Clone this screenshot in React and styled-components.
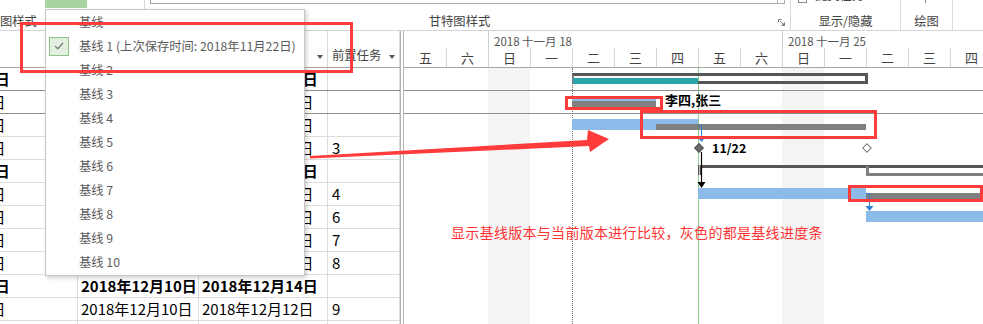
import React from 'react';
import styled, { createGlobalStyle } from 'styled-components';

const DAY = 42;
const RED = '#ff3b3b';
const FONT = '"Noto Sans CJK SC", "Noto Sans", sans-serif';
const COLS = '187px 121px 129px 72px';

const GlobalStyle = createGlobalStyle`
  *, *::before, *::after { box-sizing: border-box; }
  html, body { margin: 0; padding: 0; background: #fff; overflow: hidden; }
  body { font-family: ${FONT}; }
`;

const Page = styled.div`
  position: relative;
  width: 983px;
  height: 324px;
  overflow: hidden;
  background: #fff;
  font-family: ${FONT};
`;

/* ---------- ribbon ---------- */
const Ribbon = styled.div`
  display: flex;
  height: 31px;
  border-bottom: 1px solid #d4d4d4;
`;

const Group = styled.div`
  position: relative;
  flex: ${p => (p.$width ? `0 0 ${p.$width}px` : '1 1 auto')};
  display: flex;
  flex-direction: column;
  border-right: ${p => (p.$width ? '1px solid #dadada' : 'none')};
`;

const GroupTop = styled.div`
  height: 10px;
  display: flex;
  align-items: flex-start;
`;

const GroupLabel = styled.div`
  flex: 1;
  display: flex;
  align-items: center;
  justify-content: ${p => p.$align || 'center'};
  padding: 3px ${p => p.$padRight || 0}px 0 0;
  font-size: 12.3px;
  color: #444;
  white-space: nowrap;
`;

const GreenTab = styled.div`
  margin-left: 45px;
  width: 42px;
  height: 8px;
  background: #a9d4a2;
`;

const Field = styled.div`
  margin-left: 5px;
  width: 635px;
  height: 4px;
  border: 1px solid #ababab;
  border-top: none;
  display: flex;
  justify-content: flex-end;
`;

const FieldButton = styled.div`
  width: 7px;
  border-left: 1px solid #ababab;
`;

const SubmitItem = styled.div`
  margin: -12px 0 0 7px;
  height: 15px;
  display: flex;
  align-items: flex-end;
  gap: 8px;
  font-size: 12.3px;
  line-height: 15px;
  color: #444;
`;

const MiniBox = styled.div`
  width: 9px;
  height: 9px;
  margin-bottom: 0;
  border: 1px solid #8a8a8a;
`;

const Tick = styled.div`
  margin-left: 24px;
  width: 1px;
  height: 3px;
  background: #888;
`;

const Launcher = styled.svg`
  position: absolute;
  right: 5px;
  bottom: 4px;
  width: 7px;
  height: 7px;
`;

/* ---------- task table ---------- */
const Main = styled.div`
  display: flex;
  height: 293px;
`;

const TablePane = styled.div`
  flex: 0 0 400px;
  overflow: hidden;
`;

const TableScroll = styled.div`
  margin-left: -109px;
`;

const HeadRow = styled.div`
  display: grid;
  grid-template-columns: ${COLS};
  height: 37px;
  border-bottom: 1px solid #a8a8a8;
`;

const HeadCell = styled.div`
  display: flex;
  align-items: center;
  padding: 12px 4px 0 4px;
  border-right: 1px solid #dadada;
  font-size: 12.3px;
  color: #444;
  white-space: nowrap;
  overflow: hidden;
`;

const DropArrow = styled.span`
  margin: 3px 0 0 auto;
  width: 0;
  height: 0;
  border-left: 3.5px solid transparent;
  border-right: 3.5px solid transparent;
  border-top: 4px solid #555;
`;

const Row = styled.div`
  display: grid;
  grid-template-columns: ${COLS};
  height: 23px;
  border-bottom: 1px solid ${p => (p.$dark ? '#8f8f8f' : '#dcdcdc')};
  font-weight: ${p => (p.$bold ? 700 : 400)};
`;

const Cell = styled.div`
  padding-left: ${p => p.$pad ?? 3}px;
  border-right: 1px solid #dcdcdc;
  font-size: 15px;
  line-height: 22px;
  color: #000;
  white-space: nowrap;
  overflow: hidden;
`;

/* ---------- gantt ---------- */
const Splitter = styled.div`
  flex: 0 0 4px;
  border-left: 1px solid #b3b3b3;
  border-right: 1px solid #b3b3b3;
`;

const ChartPane = styled.div`
  flex: 1;
  overflow: hidden;
`;

const TimeHead = styled.div`
  height: 37px;
  border-bottom: 1px solid #a8a8a8;
  display: flex;
  flex-direction: column;
`;

const WeekTier = styled.div`
  display: flex;
  height: 18px;
`;

const WeekCell = styled.div`
  flex: 0 0 ${p => p.$days * DAY}px;
  border-left: 1px solid ${p => (p.$first ? 'transparent' : '#d0d0d0')};
  padding: 3px 0 0 5px;
  font-size: 11.5px;
  line-height: 14px;
  color: #555;
  white-space: nowrap;
`;

const DayTier = styled.div`
  display: flex;
  flex: 1;
`;

const DayCell = styled.div`
  flex: 0 0 ${DAY}px;
  display: flex;
  align-items: center;
  justify-content: center;
  border-left: 1px solid ${p => (p.$first ? 'transparent' : '#d6d6d6')};
  font-size: 13px;
  color: #444;
`;

const ChartBody = styled.div`
  position: relative;
  height: 256px;
`;

const Bands = styled.div`
  position: absolute;
  inset: 0;
  display: flex;
`;

const Band = styled.div`
  flex: 0 0 ${DAY}px;
  background: ${p => (p.$off ? '#f4f4f4' : 'transparent')};
`;

const DateLine = styled.div`
  position: absolute;
  top: 0;
  bottom: 0;
  left: ${p => p.$day * DAY}px;
  border-left: 1px ${p => (p.$dotted ? 'dotted #6f6f6f' : 'solid #8fc88f')};
`;

const GanttRow = styled.div`
  position: relative;
  height: 23px;
  border-bottom: 1px solid ${p => (p.$dark ? '#8f8f8f' : 'transparent')};
`;

const TaskBar = styled.div`
  position: absolute;
  top: 5px;
  height: 11px;
  background: #8cbbea;
`;

const BaselineBar = styled.div`
  position: absolute;
  top: 10px;
  height: 6px;
  background: #808080;
`;

const SummaryBox = styled.div`
  position: absolute;
  top: 5px;
  height: 11px;
  border: 3px solid #555;
  border-left: 2px solid #7a7a7a;
`;

const Progress = styled.div`
  position: absolute;
  top: 10px;
  height: 6px;
  background: #2aa4a8;
`;

const SummaryLine = styled.div`
  position: absolute;
  top: 5px;
  height: 3px;
  background: #555;
`;

const SummaryCap = styled.div`
  position: absolute;
  top: 5px;
  width: 3px;
  height: 10px;
  border-left: 1px solid #555;
  border-right: 1px solid #555;
  background: #bbb;
`;

const BaseSummary = styled.div`
  position: absolute;
  top: 6px;
  height: 10px;
  border-left: 3px solid #808080;
  border-bottom: 3px solid #808080;
`;

const Diamond = styled.div`
  position: absolute;
  top: 11px;
  width: 7px;
  height: 7px;
  transform: translate(-50%, -50%) rotate(45deg);
  background: ${p => (p.$hollow ? '#fff' : '#6b6b6b')};
  border: 1px solid ${p => (p.$hollow ? '#7a7a7a' : '#555')};
`;

const BarLabel = styled.div`
  position: absolute;
  top: ${p => p.$top ?? 0}px;
  line-height: 22px;
  font-size: ${p => p.$size || 13}px;
  font-weight: 700;
  color: #000;
  white-space: nowrap;
`;

const Links = styled.svg`
  position: absolute;
  inset: 0;
  width: 100%;
  height: 100%;
  pointer-events: none;
`;

/* ---------- baseline menu ---------- */
const Menu = styled.div`
  position: absolute;
  left: 45px;
  top: 9px;
  width: 260px;
  height: 267px;
  background: #fff;
  border: 1px solid #c6c6c6;
  box-shadow: 2px 2px 4px rgba(0, 0, 0, 0.18);
  z-index: 5;
`;

const MenuItem = styled.div`
  display: flex;
  align-items: center;
  height: 24px;
  font-size: 12.3px;
  color: #5b5b5b;
  white-space: nowrap;
`;

const IconSlot = styled.div`
  flex: 0 0 33px;
  padding-left: 3px;
  display: flex;
  align-items: center;
`;

const CheckBox = styled.div`
  width: 20px;
  height: 19px;
  background: #e3f0e0;
  border: 1px solid #8cc487;
  display: flex;
  align-items: center;
  justify-content: center;
`;

/* ---------- red annotations ---------- */
const Mark = styled.div`
  position: absolute;
  border: 3px solid ${RED};
  z-index: 10;
`;

const Note = styled.div`
  position: absolute;
  left: 451px;
  top: 222px;
  font-size: 14px;
  letter-spacing: 0.3px;
  line-height: 20px;
  color: #ff3333;
  white-space: nowrap;
  z-index: 10;
`;

const Overlay = styled.svg`
  position: absolute;
  inset: 0;
  width: 983px;
  height: 324px;
  pointer-events: none;
  z-index: 10;
`;

const DAYS = ['五', '六', '日', '一', '二', '三', '四', '五', '六', '日', '一', '二', '三', '四'];
const WEEKS = [
  { days: 2, label: '' },
  { days: 7, label: '2018 十一月 18' },
  { days: 7, label: '2018 十一月 25' },
];

const COLUMNS = ['完成时间', '基线开始时间', '基线完成时间', '前置任务'];

const TASKS = [
  { cells: ['2018年11月26日', '2018年11月20日', '2018年11月26日', ''], bold: true, dark: true,
    chart: { summary: [4, 11], progress: [4, 7] } },
  { cells: ['2018年11月21日', '2018年11月20日', '2018年11月21日', ''], dark: true,
    chart: { task: [4, 6], base: [4, 6], label: '李四,张三' } },
  { cells: ['2018年11月22日', '2018年11月22日', '2018年11月26日', ''],
    chart: { task: [4, 7], base: [6, 11] } },
  { cells: ['2018年11月22日', '2018年11月26日', '2018年11月26日', '3'],
    chart: { milestone: 7, baseMilestone: 11, label: '11/22' } },
  { cells: ['2018年11月29日', '2018年11月26日', '2018年11月29日', ''], bold: true,
    chart: { summaryLine: [7, 15], baseSummary: [11, 15] } },
  { cells: ['2018年11月26日', '2018年11月26日', '2018年11月27日', '4'],
    chart: { task: [7, 11], base: [11, 15] } },
  { cells: ['2018年11月29日', '2018年11月27日', '2018年11月28日', '6'],
    chart: { task: [11, 15] } },
  { cells: ['2018年11月29日', '2018年11月28日', '2018年11月29日', '7'], chart: {} },
  { cells: ['2018年11月29日', '2018年11月29日', '2018年11月29日', '8'], chart: {} },
  { cells: ['2018年12月14日', '2018年12月10日', '2018年12月14日', ''], bold: true, chart: {} },
  { cells: ['2018年12月12日', '2018年12月10日', '2018年12月12日', '9'], chart: {} },
  { cells: ['', '', '', ''], chart: {} },
];

const BASELINES = ['基线', '基线 1 (上次保存时间: 2018年11月22日)', '基线 2', '基线 3', '基线 4',
  '基线 5', '基线 6', '基线 7', '基线 8', '基线 9', '基线 10'];

const span = ([a, b], extra = 0) => ({ left: a * DAY, width: (b - a) * DAY + extra });

function GanttLine({ chart, dark }) {
  return (
    <GanttRow $dark={dark}>
      {chart.summary && <SummaryBox style={span(chart.summary, 2)} />}
      {chart.progress && <Progress style={{ left: chart.progress[0] * DAY + 1, width: (chart.progress[1] - chart.progress[0]) * DAY - 1 }} />}
      {chart.task && <TaskBar style={span(chart.task)} />}
      {chart.base && <BaselineBar style={span(chart.base)} />}
      {chart.summaryLine && <SummaryLine style={span(chart.summaryLine)} />}
      {chart.summaryLine && <SummaryCap style={{ left: chart.summaryLine[0] * DAY }} />}
      {chart.baseSummary && <BaseSummary style={span(chart.baseSummary, 1)} />}
      {chart.milestone != null && <Diamond style={{ left: chart.milestone * DAY + 1 }} />}
      {chart.baseMilestone != null && <Diamond $hollow style={{ left: chart.baseMilestone * DAY + 1 }} />}
      {chart.label && chart.task && (
        <BarLabel $top={-2} style={{ left: chart.task[1] * DAY + 9 }}>{chart.label}</BarLabel>
      )}
      {chart.label && chart.milestone != null && (
        <BarLabel $size={12.5} style={{ left: chart.milestone * DAY + 14 }}>{chart.label}</BarLabel>
      )}
    </GanttRow>
  );
}

export default function App() {
  return (
    <Page>
      <GlobalStyle />
      <Ribbon>
        <Group $width={145}>
          <GroupTop>
            <GreenTab />
          </GroupTop>
          <GroupLabel $align="flex-start">图样式</GroupLabel>
        </Group>
        <Group $width={646}>
          <GroupTop>
            <Field>
              <FieldButton />
            </Field>
          </GroupTop>
          <GroupLabel $padRight={16}>甘特图样式</GroupLabel>
          <Launcher viewBox="0 0 7 7">
            <path d="M0.5 3.5V0.5H3.5" fill="none" stroke="#7a7a7a" strokeWidth="1" />
            <path d="M2 2L5.5 5.5" stroke="#7a7a7a" strokeWidth="1" />
            <polygon points="3,7 7,7 7,3" fill="#7a7a7a" />
          </Launcher>
        </Group>
        <Group $width={110}>
          <GroupTop>
            <SubmitItem>
              <MiniBox />
              <span>提交任务</span>
            </SubmitItem>
          </GroupTop>
          <GroupLabel>显示/隐藏</GroupLabel>
        </Group>
        <Group $width={52}>
          <GroupTop>
            <Tick />
          </GroupTop>
          <GroupLabel>绘图</GroupLabel>
        </Group>
        <Group>
          <GroupTop />
        </Group>
      </Ribbon>

      <Main>
        <TablePane>
          <TableScroll>
            <HeadRow>
              {COLUMNS.map(title => (
                <HeadCell key={title}>
                  <span>{title}</span>
                  <DropArrow />
                </HeadCell>
              ))}
            </HeadRow>
            {TASKS.map((t, i) => (
              <Row key={i} $bold={t.bold} $dark={t.dark}>
                {t.cells.map((c, j) => (
                  <Cell key={j} $pad={j === 3 ? 4 : 3}>{c}</Cell>
                ))}
              </Row>
            ))}
          </TableScroll>
        </TablePane>

        <Splitter />

        <ChartPane>
          <TimeHead>
            <WeekTier>
              {WEEKS.map((w, i) => (
                <WeekCell key={i} $days={w.days} $first={i === 0}>{w.label}</WeekCell>
              ))}
            </WeekTier>
            <DayTier>
              {DAYS.map((d, i) => (
                <DayCell key={i} $first={i === 0}>{d}</DayCell>
              ))}
            </DayTier>
          </TimeHead>
          <ChartBody>
            <Bands>
              {DAYS.map((d, i) => (
                <Band key={i} $off={d === '日'} />
              ))}
            </Bands>
            <DateLine $day={4} $dotted />
            <DateLine $day={7} />
            {TASKS.map((t, i) => (
              <GanttLine key={i} chart={t.chart} dark={t.dark} />
            ))}
            <Links>
              <path d="M294 57.5H297.5V70" fill="none" stroke="#2f7fd6" strokeWidth="1" />
              <polygon points="293.5,69 301.5,69 297.5,74" fill="#2f7fd6" />
              <path d="M297.5 84V115" fill="none" stroke="#000" strokeWidth="1.2" />
              <polygon points="293.5,114 301.5,114 297.5,120" fill="#000" />
              <path d="M462 125.5H465.5V139" fill="none" stroke="#2f7fd6" strokeWidth="1" />
              <polygon points="461.5,138 469.5,138 465.5,143" fill="#2f7fd6" />
            </Links>
          </ChartBody>
        </ChartPane>
      </Main>

      <Menu>
        {BASELINES.map((b, i) => (
          <MenuItem key={b}>
            <IconSlot>
              {i === 1 && (
                <CheckBox>
                  <svg width="10" height="8" viewBox="0 0 10 8">
                    <polyline points="1,4 3.8,6.8 9,1" fill="none" stroke="#7d7d7d" strokeWidth="1.3" />
                  </svg>
                </CheckBox>
              )}
            </IconSlot>
            <span>{b}</span>
          </MenuItem>
        ))}
      </Menu>

      <Mark style={{ left: 20, top: 22, width: 333, height: 51 }} />
      <Mark style={{ left: 565, top: 96, width: 98, height: 14 }} />
      <Mark style={{ left: 640, top: 110, width: 237, height: 29 }} />
      <Mark style={{ left: 848, top: 185, width: 135, height: 17 }} />
      <Overlay viewBox="0 0 983 324">
        <polygon
          points="310,156 587,140 588,130 609,139 590,152 589,146 310,158.5"
          fill={RED}
        />
      </Overlay>
      <Note>显示基线版本与当前版本进行比较，灰色的都是基线进度条</Note>
    </Page>
  );
}
